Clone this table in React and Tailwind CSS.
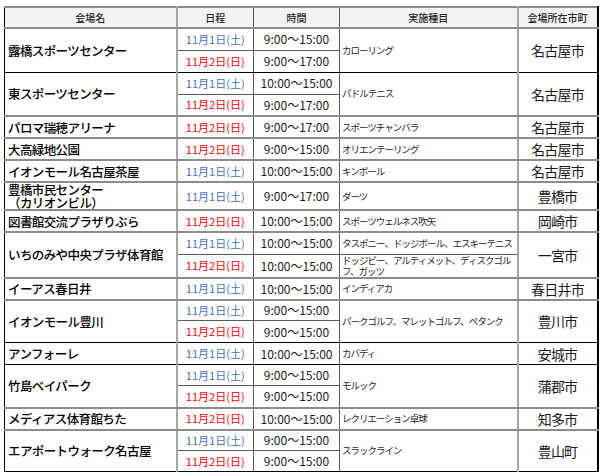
import React from 'react';

// 会場一覧（2日間のイベント）
const venues = [
    { name: ['露橋スポーツセンター'], event: 'カローリング', city: '名古屋市', days: [['1', '9:00～15:00'], ['2', '9:00～17:00']], sep: 'black' },
    { name: ['東スポーツセンター'], event: 'パドルテニス', city: '名古屋市', days: [['1', '10:00～15:00'], ['2', '9:00～17:00']], sep: 'gray' },
    { name: ['パロマ瑞穂アリーナ'], event: 'スポーツチャンバラ', city: '名古屋市', days: [['2', '9:00～17:00']], sep: 'gray' },
    { name: ['大高緑地公園'], event: 'オリエンテーリング', city: '名古屋市', days: [['2', '9:00～15:00']], sep: 'gray' },
    { name: ['イオンモール名古屋茶屋'], event: 'キンボール', city: '名古屋市', days: [['1', '10:00～15:00']], sep: 'gray' },
    { name: ['豊橋市民センター', '（カリオンビル）'], event: 'ダーツ', city: '豊橋市', days: [['1', '9:00～17:00']], sep: 'gray', h: ['h-[26px]'] },
    { name: ['図書館交流プラザりぶら'], event: 'スポーツウェルネス吹矢', city: '岡崎市', days: [['2', '10:00～15:00']], sep: 'gray' },
    {
        name: ['いちのみや中央プラザ体育館'],
        events: [['タスポニー、ドッジボール、エスキーテニス'], ['ドッジビー、アルティメット、ディスクゴル', 'フ、ガッツ']],
        city: '一宮市',
        days: [['1', '10:00～15:00'], ['2', '10:00～15:00']],
        sep: 'gray',
        h: ['h-[22px]', 'h-[23px]'],
    },
    { name: ['イーアス春日井'], event: 'インディアカ', city: '春日井市', days: [['1', '10:00～15:00']], sep: 'gray' },
    { name: ['イオンモール豊川'], event: 'パークゴルフ、マレットゴルフ、ペタンク', city: '豊川市', days: [['1', '9:00～15:00'], ['2', '9:00～15:00']], sep: 'black', h: ['h-[21px]', 'h-[22px]'] },
    { name: ['アンフォーレ'], event: 'カバディ', city: '安城市', days: [['1', '10:00～15:00']], sep: 'black' },
    { name: ['竹島ベイパーク'], event: 'モルック', city: '蒲郡市', days: [['1', '9:00～15:00'], ['2', '9:00～15:00']], sep: 'gray', h: ['h-[21px]', 'h-[22px]'] },
    { name: ['メディアス体育館ちた'], event: 'レクリエーション卓球', city: '知多市', days: [['2', '10:00～15:00']], sep: 'gray' },
    { name: ['エアポートウォーク名古屋'], event: 'スラックライン', city: '豊山町', days: [['1', '9:00～15:00'], ['2', '9:00～15:00']], sep: 'black', h: ['h-[21px]', 'h-[21px]'] },
];

const SEP = {
    black: 'border-b border-b-black',
    gray: 'border-b-2 border-b-[#8c8c8c]',
};
const INNER = 'border-b border-b-[#595959]';

const DateLabel = ({ day }) =>
    day === '1' ? (
        <span className="text-[#4472c4]">11月1日(土)</span>
    ) : (
        <span className="text-[#ff0000]">11月2日(日)</span>
    );

const Lines = ({ lines }) =>
    lines.map((l, i) => (
        <span key={i} className="block">
            {l}
        </span>
    ));

export default function App() {
    return (
        <div className="min-h-[476px] bg-white pl-[4px] pt-[6px] font-['Noto_Sans_CJK_JP','Noto_Sans_CJK_SC',sans-serif]">
            <table className="w-[593px] table-fixed border-collapse border-l border-r-2 border-t-2 border-l-black border-r-black border-t-[#8c8c8c]">
                <colgroup>
                    <col className="w-[172px]" />
                    <col className="w-[77px]" />
                    <col className="w-[86px]" />
                    <col className="w-[178px]" />
                    <col className="w-[80px]" />
                </colgroup>
                <thead>
                    <tr className="h-[21px] bg-[#f2f2f2] text-[10px] leading-none text-[#262626]">
                        <th className="border-b-2 border-r-2 border-b-[#8c8c8c] border-r-[#a6a6a6] font-medium">会場名</th>
                        <th className="border-b-2 border-r border-b-[#8c8c8c] border-r-[#595959] font-medium">日程</th>
                        <th className="border-b-2 border-r border-b-[#8c8c8c] border-r-[#595959] font-medium">時間</th>
                        <th className="border-b-2 border-r-2 border-b-[#8c8c8c] border-r-[#a6a6a6] font-medium">実施種目</th>
                        <th className="border-b-2 border-b-[#8c8c8c] font-medium">会場所在市町</th>
                    </tr>
                </thead>
                <tbody>
                    {venues.flatMap((v, vi) =>
                        v.days.map(([day, time], di) => {
                            const first = di === 0;
                            const last = di === v.days.length - 1;
                            const rows = v.days.length;
                            const bottom = last ? SEP[v.sep] : INNER;
                            const height = (v.h && v.h[di]) || 'h-[22px]';

                            return (
                                <tr key={`${vi}-${di}`} className={height}>
                                    {first && (
                                        <td
                                            rowSpan={rows}
                                            className={`${SEP[v.sep]} border-r-2 border-r-[#a6a6a6] pl-[3px] text-[12.5px] font-medium leading-[13px] tracking-[-0.6px] whitespace-nowrap text-black`}
                                        >
                                            <Lines lines={v.name} />
                                        </td>
                                    )}
                                    <td className={`${bottom} border-r border-r-[#595959] text-center text-[11px] leading-none whitespace-nowrap`}>
                                        <DateLabel day={day} />
                                    </td>
                                    <td className={`${bottom} border-r border-r-[#595959] text-center text-[12px] leading-none whitespace-nowrap text-[#1a1a1a]`}>
                                        {time}
                                    </td>
                                    {v.events ? (
                                        <td className={`${bottom} border-r-2 border-r-[#a6a6a6] pl-[2px] text-[9.5px] leading-[11px] tracking-[-1px] whitespace-nowrap text-[#262626]`}>
                                            <Lines lines={v.events[di]} />
                                        </td>
                                    ) : (
                                        first && (
                                            <td
                                                rowSpan={rows}
                                                className={`${SEP[v.sep]} border-r-2 border-r-[#a6a6a6] pl-[2px] text-[9.5px] leading-[11px] tracking-[-1px] whitespace-nowrap text-[#262626]`}
                                            >
                                                {v.event}
                                            </td>
                                        )
                                    )}
                                    {first && (
                                        <td rowSpan={rows} className={`${SEP[v.sep]} text-center text-[14px] leading-none tracking-[-0.8px] whitespace-nowrap text-[#1a1a1a]`}>
                                            {v.city}
                                        </td>
                                    )}
                                </tr>
                            );
                        })
                    )}
                </tbody>
            </table>
        </div>
    );
}
